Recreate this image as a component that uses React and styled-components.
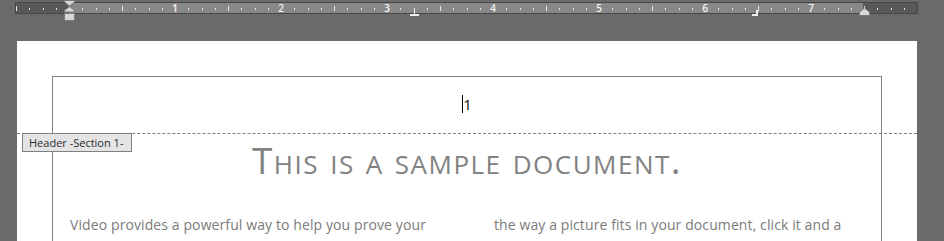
import styled, { createGlobalStyle } from "styled-components";

const GlobalStyle = createGlobalStyle`
  html, body {
    margin: 0;
    background: #6a6a6a;
    overflow: hidden;
  }
`;

const Screen = styled.div`
  width: 944px;
  height: 241px;
  overflow: hidden;
  background: #6a6a6a;
`;

const RulerBar = styled.div`
  height: 24px;
`;

const Page = styled.div`
  position: relative;
  margin: 17px 0 0 17px;
  width: 900px;
  height: 300px;
  background: #ffffff;
  padding: 35px 35px 0 35px;
  box-sizing: border-box;
  overflow: hidden;
`;

const TextBox = styled.div`
  border: 1px solid #808080;
  border-bottom: none;
  height: 300px;
`;

const HeaderLine = styled.p`
  margin: 0;
  padding-top: 18px;
  height: 38px;
  text-align: center;
  font-family: "Noto Sans", sans-serif;
  font-size: 15px;
  line-height: 18px;
  color: #222;
`;

const Caret = styled.span`
  display: inline-block;
  width: 1px;
  height: 18px;
  background: #000;
  vertical-align: top;
`;

const Title = styled.h1`
  margin: 0;
  padding-top: 5px;
  text-align: center;
  font-family: "Open Sans", sans-serif;
  font-weight: 400;
  font-size: 37px;
  line-height: 44px;
  font-variant: small-caps;
  color: #828282;
  letter-spacing: 1.5px;
`;

const Columns = styled.div`
  display: grid;
  grid-template-columns: 424px 1fr;
  padding: 34px 0 0 17px;
`;

const Para = styled.p`
  margin: 0;
  font-family: "Open Sans", sans-serif;
  font-size: 14px;
  line-height: 18px;
  color: #7b7b7b;
  letter-spacing: 0.1px;
  white-space: nowrap;
`;

const DashedRule = styled.div`
  position: absolute;
  left: 0;
  right: 0;
  top: 92px;
  height: 0;
  border-top: 1px dashed #808080;
`;

const HeaderTag = styled.div`
  position: absolute;
  left: 5px;
  top: 92px;
  width: 102px;
  height: 17px;
  background: #e4e4e4;
  border: 1px solid #808080;
  font-family: "Open Sans", sans-serif;
  font-size: 11px;
  line-height: 17px;
  color: #2a2a2a;
  padding-left: 6px;
  box-sizing: content-box;
  white-space: nowrap;
`;

const Ruler = () => {
  const zero = 69;
  const step = 106 / 8;
  const marks = [];
  for (let i = -4; i <= 64; i++) {
    const x = zero + i * step;
    if (x < 16 || x > 916) continue;
    if (i === 0) continue;
    if (i % 8 === 0) {
      marks.push(
        <text key={i} x={x} y={12} textAnchor="middle" fontSize="10" fontWeight="600"
          fontFamily="Open Sans, sans-serif" fill="#f4f4f4">{i / 8}</text>
      );
    } else if (i % 4 === 0) {
      marks.push(<rect key={i} x={Math.round(x)} y={6} width={1} height={5} fill="#e6e6e6" />);
    } else {
      marks.push(<rect key={i} x={Math.round(x)} y={8} width={1} height={2} fill="#e6e6e6" />);
    }
  }
  return (
    <svg width="944" height="24" style={{ display: "block" }}>
      <rect x="15.5" y="2.5" width="902" height="11" fill="#595959" stroke="#484848" />
      <rect x="69" y="3" width="794" height="10" fill="#888888" />
      {marks}
      <rect x="414" y="10" width="1" height="4" fill="#eeeeee" />
      <rect x="410" y="14" width="9" height="2" fill="#eeeeee" />
      <rect x="756" y="10" width="2" height="6" fill="#eeeeee" />
      <rect x="752" y="14" width="6" height="2" fill="#eeeeee" />
      <polygon points="64.5,0.5 74.5,0.5 74.5,2 69.5,6 64.5,2" fill="#d6d6d6" stroke="#7a7a7a" />
      <polygon points="69.5,6.5 74.5,10.5 74.5,12 64.5,12 64.5,10.5" fill="#d6d6d6" stroke="#7a7a7a" />
      <rect x="64.5" y="13.5" width="10" height="7" fill="#d6d6d6" stroke="#7a7a7a" />
      <polygon points="864.5,8 869.5,12 869.5,15.5 859.5,15.5 859.5,12" fill="#d6d6d6" stroke="#7a7a7a" />
    </svg>
  );
};

export default function App() {
  return (
    <Screen>
      <GlobalStyle />
      <RulerBar>
        <Ruler />
      </RulerBar>
      <Page>
        <TextBox>
          <HeaderLine>
            <Caret />1
          </HeaderLine>
          <Title>This is a sample document.</Title>
          <Columns>
            <Para>Video provides a powerful way to help you prove your</Para>
            <Para>the way a picture fits in your document, click it and a</Para>
          </Columns>
        </TextBox>
        <DashedRule />
        <HeaderTag>Header -Section 1-</HeaderTag>
      </Page>
    </Screen>
  );
}
